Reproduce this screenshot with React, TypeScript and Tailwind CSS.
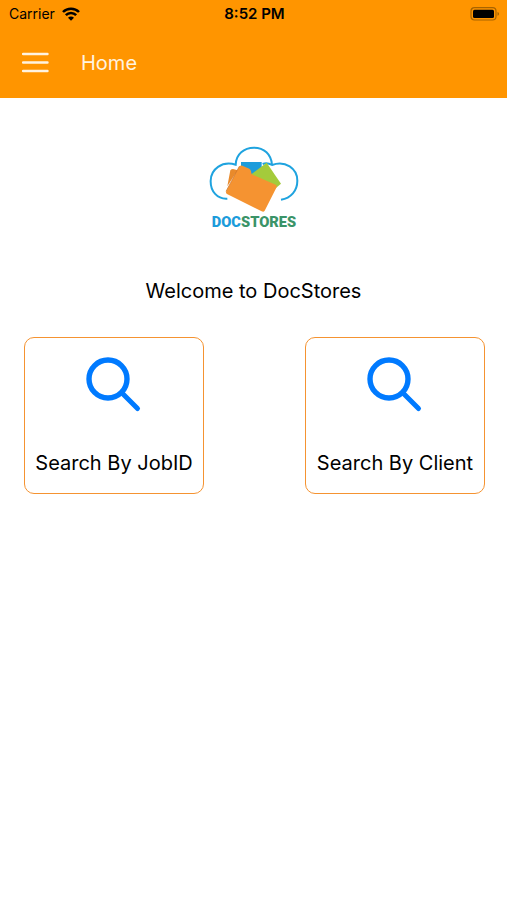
import React from 'react';

const cards = [
  { id: 'job', label: 'Search By JobID' },
  { id: 'client', label: 'Search By Client' },
];

const WifiIcon = () => (
  <svg className="h-[14px] w-[18px]" viewBox="0 0 54 42" fill="none" stroke="black" strokeWidth="7.5">
    <path d="M3 15C16 1.500 38 1.500 51 15" />
    <path d="M11.500 24.500C20 15.500 34 15.500 42.500 24.500" />
    <path d="M18 32C23.500 27 30.500 27 36 32L27 41Z" fill="black" stroke="none" />
  </svg>
);

const BatteryIcon = () => (
  <svg className="h-[14px] w-[30px]" viewBox="0 0 30 14" fill="none">
    <rect x="1" y="0.700" width="25" height="12.300" rx="3.500" stroke="#a86400" strokeWidth="1.200" />
    <rect x="3" y="2.800" width="21" height="8.200" rx="1.500" fill="black" />
    <path d="M27.500 5C29.500 5.500 29.500 8.200 27.500 8.800Z" fill="#a86400" />
  </svg>
);

const SearchIcon = () => (
  <svg className="h-14 w-14" viewBox="0 0 56 56" fill="none" stroke="#007aff" strokeLinecap="round">
    <circle cx="22" cy="22" r="19" strokeWidth="5.400" />
    <path d="M36.500 36.500L51.500 51.500" strokeWidth="5" />
  </svg>
);

const Logo = () => (
  <svg className="h-[95px] w-[108px]" viewBox="0 0 324 285" role="img" aria-label="DocStores">
    <path
      d="M82 176C52 178 31 154 32 122C33 88 65 62 107 74C108 42 132 23 162 23C192 23 214 43 216 75M188 72C198 67 206 69 216 75C256 60 292 86 292 122C292 152 273 174 243 179"
      fill="none"
      stroke="#1fa3df"
      strokeWidth="6"
    />
    <path d="M123 66H185V110H123Z" fill="#1c9cdb" />
    <path d="M91 91Q94 87 99 87L113 91L82 139Z" fill="#e98a2b" />
    <path d="M200 68L243 131L218 152L150 106Z" fill="#a4cb3b" />
    <path
      d="M118 79Q122 75 127 77L148 86Q152 88 153 94L155 103L227 134Q232 137 229 143L194 212Q191 217 185 214L81 162Q76 159 79 153Z"
      fill="#f59331"
    />
    <path d="M118 79L78 154" stroke="#c96d20" strokeWidth="2" />
    <text
      x="162"
      y="261"
      textAnchor="middle"
      fontSize="44"
      fontWeight="900"
      className="font-['Roboto','Liberation_Sans',sans-serif]"
    >
      <tspan fill="#1c9cdb">DOC</tspan>
      <tspan fill="#3b9468">STORES</tspan>
    </text>
  </svg>
);

const App = () => {
  return (
    <div className="min-h-screen bg-white font-['Inter',sans-serif] text-black">
      <header className="bg-[#ff9500]">
        {/* Status bar */}
        <div className="grid h-7 grid-cols-3 items-center pl-[9px] pr-[7px] text-sm">
          <div className="flex items-center gap-[7px]">
            <span>Carrier</span>
            <WifiIcon />
          </div>
          <span className="text-center text-[15px] font-semibold">8:52 PM</span>
          <div className="flex justify-end">
            <BatteryIcon />
          </div>
        </div>
        {/* Navigation */}
        <div className="flex h-[70px] items-center gap-8 px-[22px] text-[#fff3e0]">
          <button type="button" aria-label="Open menu">
            <svg className="h-7 w-[27px]" viewBox="0 0 27 28" stroke="currentColor" strokeWidth="2.400" strokeLinecap="round">
              <path d="M1 5H25.500M1 13.500H25.500M1 22H25.500" />
            </svg>
          </button>
          <h1 className="text-xl">Home</h1>
        </div>
      </header>

      <main className="pt-[42px]">
        <div className="flex flex-col items-center gap-[42px]">
          <Logo />
          <p className="text-xl">Welcome to DocStores</p>
        </div>
        <div className="mt-8 flex justify-between pl-6 pr-[22px]">
          {cards.map(card => (
            <button
              key={card.id}
              type="button"
              className="flex w-[180px] flex-col items-center gap-9 rounded-[10px] border border-[#f59331] pb-4 pt-[19px]"
            >
              <SearchIcon />
              <span className="whitespace-nowrap text-xl">{card.label}</span>
            </button>
          ))}
        </div>
      </main>
    </div>
  );
};

export default App;
